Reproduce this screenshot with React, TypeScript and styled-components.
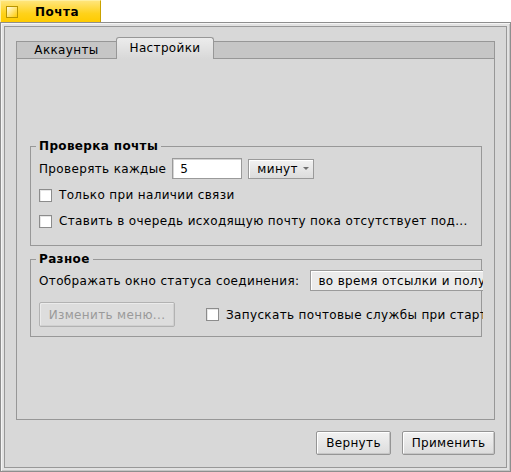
import React from 'react'
import styled, { createGlobalStyle } from 'styled-components'

const GlobalStyle = createGlobalStyle`
  html, body {
    margin: 0;
    padding: 0;
    background: #ffffff;
  }
  body {
    font-family: 'DejaVu Sans', 'Liberation Sans', sans-serif;
    font-size: 12px;
    letter-spacing: 0.35px;
    color: #000000;
  }
  * {
    box-sizing: border-box;
  }
`

const Window = styled.div`
  width: 511px;
  height: 472px;
  display: flex;
  flex-direction: column;
  overflow: hidden;
`

const TitleTab = styled.div`
  width: 101px;
  height: 22px;
  flex-shrink: 0;
  display: flex;
  align-items: center;
  padding-left: 5px;
  background: linear-gradient(#ffe57a, #ffd21a 60%, #ffcb00);
  border-left: 1px solid #fff0a0;
  border-top: 1px solid #fff0a0;
  border-right: 1px solid #c9a200;
`

const CloseBox = styled.span`
  width: 12px;
  height: 12px;
  flex-shrink: 0;
  border: 1px solid #b89400;
  background: linear-gradient(135deg, #fffbe6 0%, #ffe680 45%, #ffcb00 100%);
`

const TitleText = styled.span`
  margin-left: 17px;
  font-weight: bold;
  letter-spacing: 0.5px;
  white-space: nowrap;
`

const Frame = styled.div`
  flex: 1;
  min-height: 0;
  display: flex;
  border: 1px solid #8e8e8e;
  background: #e2e2e2;
  padding: 3px;
  box-shadow: inset 1px 1px #f4f4f4, inset -1px -1px #c4c4c4;
`

const Content = styled.div`
  flex: 1;
  min-width: 0;
  display: flex;
  flex-direction: column;
  background: #d8d8d8;
  border: 1px solid #989898;
  padding: 10px 11px 12px 11px;
`

const TabView = styled.div`
  flex: 1;
  min-width: 0;
  display: flex;
  flex-direction: column;
`

const TabBar = styled.div`
  height: 22px;
  display: flex;
  align-items: flex-end;
`

const Tab = styled.div<{ $w: number; $active?: boolean }>`
  width: ${(p) => p.$w}px;
  height: ${(p) => (p.$active ? 22 : 18)}px;
  flex-shrink: 0;
  display: flex;
  align-items: center;
  justify-content: center;
  padding-bottom: ${(p) => (p.$active ? 2 : 0)}px;
  border: 1px solid #979797;
  border-bottom: ${(p) => (p.$active ? 'none' : '1px solid #979797')};
  border-right: ${(p) => (p.$active ? '1px solid #979797' : 'none')};
  border-radius: ${(p) => (p.$active ? '3px 3px 0 0' : '0')};
  background: ${(p) =>
    p.$active ? 'linear-gradient(#ececec, #d8d8d8)' : '#c6c6c6'};
  white-space: nowrap;
`

const TabFiller = styled.div`
  flex: 1;
  height: 18px;
  background: #c6c6c6;
  border: 1px solid #979797;
  border-left: none;
`

const Panel = styled.div`
  flex: 1;
  min-width: 0;
  display: flex;
  flex-direction: column;
  border: 1px solid #979797;
  border-top: none;
  padding: 0 12px 0 13px;
`

const Group = styled.fieldset<{ $mt: number }>`
  margin: ${(p) => p.$mt}px 0 0;
  padding: 0 8px;
  border: 1px solid #989898;
  min-width: 0;
`

const Legend = styled.legend`
  margin-left: -3px;
  padding: 0 3px;
  font-weight: bold;
  line-height: 14px;
`

const GroupBody = styled.div<{ $pt: number; $pb: number }>`
  display: flex;
  flex-direction: column;
  padding: ${(p) => p.$pt}px 0 ${(p) => p.$pb}px;
  margin-right: -10px;
  overflow: hidden;
`

const Row = styled.div<{ $h: number; $mt?: number; $gap: number }>`
  height: ${(p) => p.$h}px;
  margin-top: ${(p) => p.$mt ?? 0}px;
  display: flex;
  align-items: center;
  gap: ${(p) => p.$gap}px;
  white-space: nowrap;
  flex-shrink: 0;
`

const Label = styled.span`
  flex-shrink: 0;
`

const TextInput = styled.div`
  width: 70px;
  height: 21px;
  flex-shrink: 0;
  display: flex;
  align-items: center;
  padding-left: 7px;
  background: #ffffff;
  border: 1px solid #9a9a9a;
  box-shadow: inset 1px 1px #d4d4d4;
`

const MenuField = styled.div<{ $plain?: boolean }>`
  height: ${(p) => (p.$plain ? 21 : 20)}px;
  flex-shrink: 0;
  display: flex;
  align-items: center;
  padding: 0 4px 0 ${(p) => (p.$plain ? 7 : 8)}px;
  border: 1px solid #9a9a9a;
  background: ${(p) =>
    p.$plain ? '#ebebeb' : 'linear-gradient(#f2f2f2, #dcdcdc)'};
  box-shadow: inset 1px 1px #ffffff;
`

const Arrow = styled.span`
  margin-left: 5px;
  width: 0;
  height: 0;
  border-left: 3px solid transparent;
  border-right: 3px solid transparent;
  border-top: 3px solid #707070;
`

const CheckRow = styled.label<{ $mt?: number }>`
  height: 16px;
  margin-top: ${(p) => p.$mt ?? 0}px;
  display: flex;
  align-items: center;
  gap: 7px;
  white-space: nowrap;
  flex-shrink: 0;
`

const CheckBox = styled.span`
  width: 13px;
  height: 13px;
  flex-shrink: 0;
  background: #ffffff;
  border: 1px solid #8c8c8c;
  box-shadow: inset 1px 1px #e6e6e6;
`

const Button = styled.button<{ $w: number; $h?: number }>`
  width: ${(p) => p.$w}px;
  height: ${(p) => p.$h ?? 24}px;
  flex-shrink: 0;
  padding: 0;
  font: inherit;
  letter-spacing: inherit;
  color: #000000;
  border: 1px solid #959595;
  border-radius: 2px;
  background: linear-gradient(#f2f2f2, #dcdcdc);
  box-shadow: inset 1px 1px #ffffff, inset -1px -1px #c6c6c6;
  &:disabled {
    color: #9a9a9a;
    border-color: #b2b2b2;
    background: #dddddd;
    box-shadow: inset 1px 1px #ebebeb, inset -1px -1px #d0d0d0;
  }
`

const ButtonBar = styled.div`
  margin-top: 11px;
  display: flex;
  justify-content: flex-end;
  gap: 11px;
`

export default function App() {
  return (
    <>
      <GlobalStyle />
      <Window>
        <TitleTab>
          <CloseBox />
          <TitleText>Почта</TitleText>
        </TitleTab>
        <Frame>
          <Content>
            <TabView>
              <TabBar>
                <Tab $w={100}>Аккаунты</Tab>
                <Tab $w={98} $active>
                  Настройки
                </Tab>
                <TabFiller />
              </TabBar>
              <Panel>
                <Group $mt={80}>
                  <Legend>Проверка почты</Legend>
                  <GroupBody $pt={5} $pb={16}>
                    <Row $h={21} $gap={6}>
                      <Label>Проверять каждые</Label>
                      <TextInput>5</TextInput>
                      <MenuField>
                        минут
                        <Arrow />
                      </MenuField>
                    </Row>
                    <CheckRow $mt={8}>
                      <CheckBox />
                      Только при наличии связи
                    </CheckRow>
                    <CheckRow $mt={10}>
                      <CheckBox />
                      Ставить в очередь исходящую почту пока отсутствует под...
                    </CheckRow>
                  </GroupBody>
                </Group>
                <Group $mt={6}>
                  <Legend>Разное</Legend>
                  <GroupBody $pt={4} $pb={9}>
                    <Row $h={21} $gap={11}>
                      <Label>Отображать окно статуса соединения:</Label>
                      <MenuField $plain>во время отсылки и получения почты</MenuField>
                    </Row>
                    <Row $h={25} $mt={11} $gap={31}>
                      <Button $w={136} $h={25} disabled>
                        Изменить меню...
                      </Button>
                      <CheckRow>
                        <CheckBox />
                        Запускать почтовые службы при старте
                      </CheckRow>
                    </Row>
                  </GroupBody>
                </Group>
              </Panel>
            </TabView>
            <ButtonBar>
              <Button $w={75}>Вернуть</Button>
              <Button $w={93}>Применить</Button>
            </ButtonBar>
          </Content>
        </Frame>
      </Window>
    </>
  )
}
